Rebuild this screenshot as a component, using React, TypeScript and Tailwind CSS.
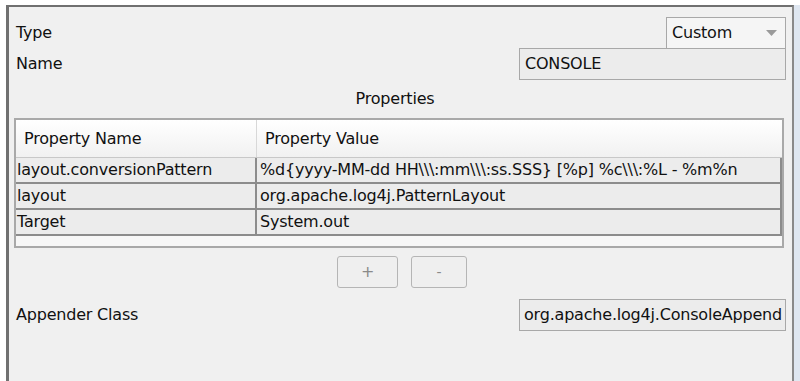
import React from 'react';

const pattern = String.raw`%d{yyyy-MM-dd HH\\\:mm\\\:ss.SSS} [%p] %c\\\:%L - %m%n`;

const rows = [
  { name: 'layout.conversionPattern', value: pattern },
  { name: 'layout', value: 'org.apache.log4j.PatternLayout' },
  { name: 'Target', value: 'System.out' },
];

export default function App() {
  return (
    <div
      className="w-[800px] h-[381px] bg-white pt-[5px] pl-[6px] overflow-hidden text-[16px] text-[#111]"
      style={{ fontFamily: '"DejaVu Sans", Verdana, sans-serif', letterSpacing: '-0.2px' }}
    >
      <div className="flex h-full">
        <div className="w-[788px] h-full bg-[#f0f0f0] border-l-[3px] border-t-2 border-[#707070] border-r-2 border-r-[#8a8a8a] flex flex-col pl-[5px] pr-[6px]">
          {/* Type */}
          <div className="flex items-center justify-between h-[31px] mt-[10px]">
            <span className="ml-[2px]">Type</span>
            <div className="w-[120px] h-[32px] border border-[#a8a8a8] bg-[#f5f5f5] flex items-center justify-between pl-[5px] pr-[8px]">
              <span>Custom</span>
              <svg width="11" height="6" viewBox="0 0 11 6">
                <path d="M0 0 L11 0 L5.5 6 Z" fill="#9a9a9a" />
              </svg>
            </div>
          </div>
          {/* Name */}
          <div className="flex items-center justify-between h-[32px]">
            <span className="ml-[2px]">Name</span>
            <div className="w-[267px] h-[32px] border border-[#a8a8a8] bg-[#ececec] flex items-center pl-[5px]">
              CONSOLE
            </div>
          </div>
          <div className="text-center h-[38px] flex items-center justify-center pr-[10px]">Properties</div>

          {/* Table */}
          <div className="w-[770px] h-[130px] border-2 border-[#a9a9a9] bg-[#f7f7f7] flex flex-col">
            <div className="flex h-[38px] bg-gradient-to-b from-white to-[#f1f1f1] border-b border-[#c8c8c8]">
              <div className="w-[241px] pl-[8px] flex items-center border-r border-[#d8d8d8]">Property Name</div>
              <div className="flex-1 pl-[8px] flex items-center">Property Value</div>
            </div>
            {rows.map((r) => (
              <div key={r.name} className="flex h-[26px] border-b-2 border-[#8c8c8c] border-r-2 bg-[#ececec]">
                <div className="w-[241px] pl-[1px] flex items-center border-r-2 border-[#8c8c8c] whitespace-nowrap overflow-hidden">
                  {r.name}
                </div>
                <div className="flex-1 pl-[3px] flex items-center whitespace-nowrap overflow-hidden">{r.value}</div>
              </div>
            ))}
          </div>

          {/* Buttons */}
          <div className="flex justify-center gap-[13px] mt-[8px] pl-[4px]">
            <button className="w-[61px] h-[32px] border border-[#b5b5b5] rounded-[3px] bg-[#efefef] text-[#8a8a8a] text-[16px]">
              +
            </button>
            <button className="w-[56px] h-[32px] border border-[#b5b5b5] rounded-[3px] bg-[#efefef] text-[#8a8a8a] text-[14px]">
              -
            </button>
          </div>

          {/* Appender Class */}
          <div className="flex items-center justify-between h-[32px] mt-[11px]">
            <span className="ml-[2px]">Appender Class</span>
            <div className="w-[267px] h-[32px] border border-[#a8a8a8] bg-[#ececec] flex items-center pl-[4px] whitespace-nowrap overflow-hidden">
              org.apache.log4j.ConsoleAppend
            </div>
          </div>
        </div>
        <div className="flex-1 bg-[#dfe7f1]" />
      </div>
    </div>
  );
}
